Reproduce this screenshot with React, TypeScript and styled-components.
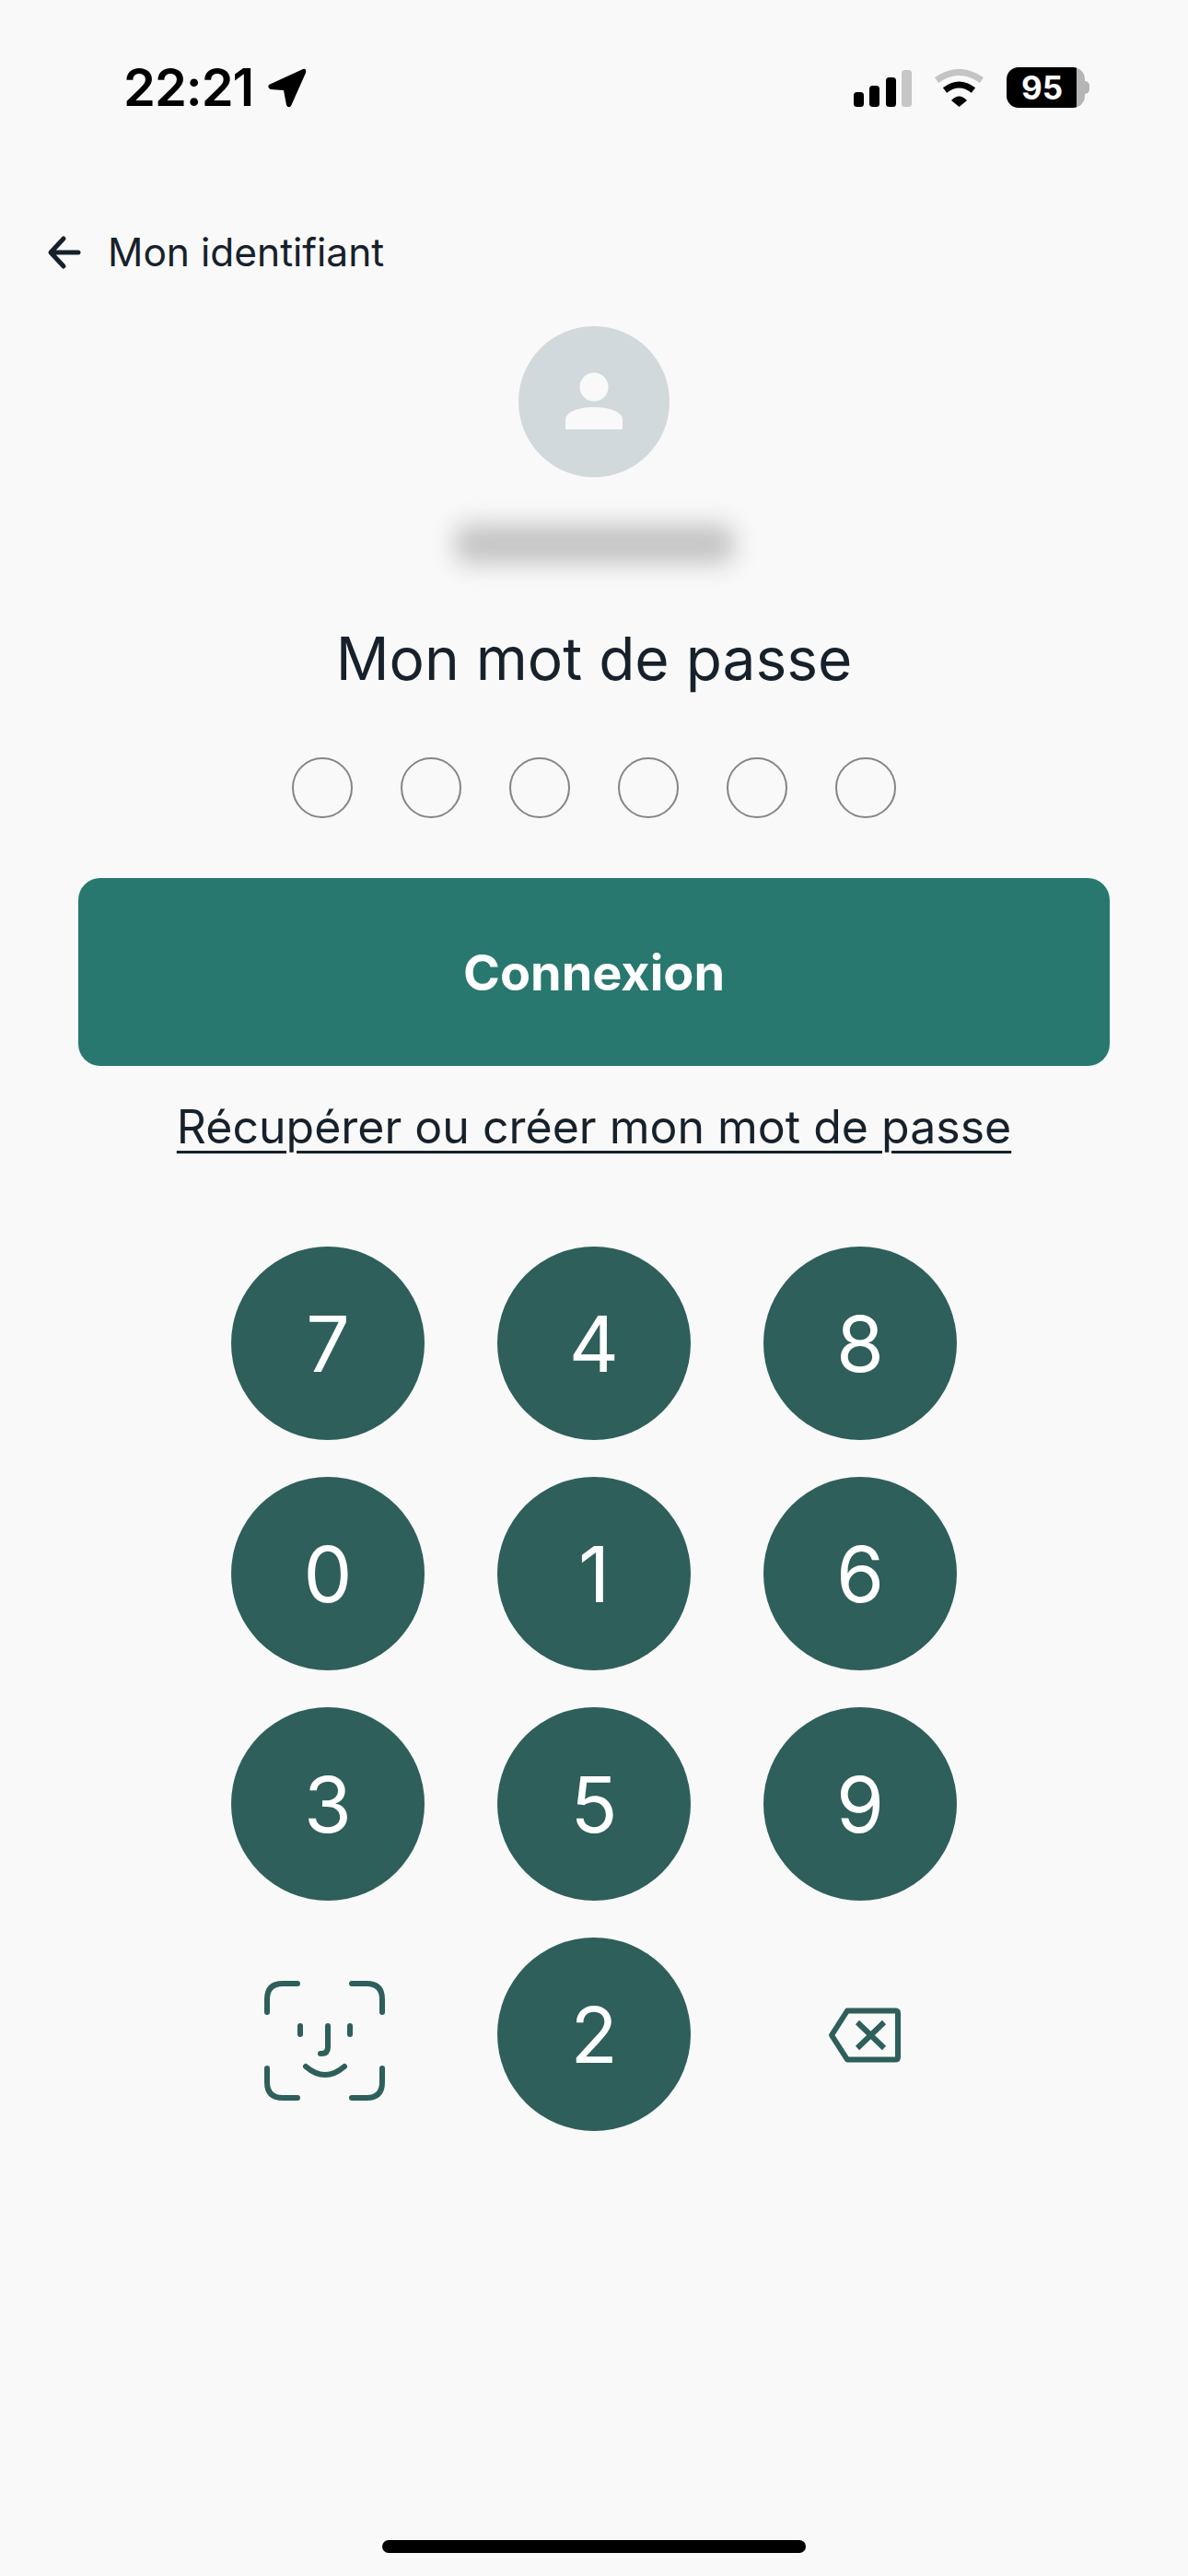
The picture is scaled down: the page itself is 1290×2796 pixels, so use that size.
import React from "react";
import styled, { createGlobalStyle } from "styled-components";

const Global = createGlobalStyle`
  html, body { margin: 0; padding: 0; background: #f9f9f9; }
  * { box-sizing: border-box; }
`;

const Screen = styled.div`
  width: 1290px;
  height: 2796px;
  background: #f9f9f9;
  font-family: Inter, "Noto Sans", sans-serif;
  color: #17212b;
  display: flex;
  flex-direction: column;
  align-items: center;
  overflow: hidden;
`;

const StatusBar = styled.div`
  width: 100%;
  height: 190px;
  padding: 70px 112px 0 134px;
  display: flex;
  align-items: flex-start;
  justify-content: space-between;
`;

const TimeGroup = styled.div`
  display: flex;
  align-items: center;
  gap: 14px;
  height: 50px;
`;

const Time = styled.span`
  font-size: 56px;
  font-weight: 600;
  line-height: 50px;
  color: #000;
  letter-spacing: -1px;
`;

const StatusIcons = styled.div`
  display: flex;
  align-items: flex-start;
  gap: 24px;
  height: 50px;
`;

const Signal = styled.svg`
  width: 63px;
  height: 40px;
  margin-top: 6px;
`;

const Wifi = styled.svg`
  width: 55px;
  height: 41px;
  margin-top: 5px;
`;

const Battery = styled.div`
  width: 85px;
  height: 44px;
  margin-top: 3px;
  border-radius: 13px;
  background: linear-gradient(90deg, #000 0, #000 90%, #b5b5b5 90%);
  color: #fff;
  font-size: 35px;
  font-weight: 700;
  line-height: 44px;
  text-align: center;
  padding-right: 8px;
  position: relative;
  &::after {
    content: "";
    position: absolute;
    left: 85px;
    top: 15px;
    width: 5px;
    height: 14px;
    border-radius: 0 7px 7px 0;
    background: #b5b5b5;
  }
`;

const BackRow = styled.div`
  width: 100%;
  height: 60px;
  margin-top: 54px;
  padding-left: 51px;
  display: flex;
  align-items: center;
  gap: 28px;
`;

const BackLabel = styled.span`
  font-size: 42.5px;
  line-height: 60px;
`;

const Avatar = styled.div`
  width: 164px;
  height: 164px;
  margin-top: 50px;
  border-radius: 50%;
  background: #d2d9dc;
  display: flex;
  align-items: center;
  justify-content: center;
`;

const BlurWindow = styled.div`
  width: 411px;
  height: 117px;
  margin-top: 14px;
  overflow: hidden;
  padding: 37px 54px;
`;

const BlurredName = styled.div`
  width: 100%;
  height: 43px;
  border-radius: 14px;
  background: #c4c4c4;
  filter: blur(13px);
`;

const Title = styled.h1`
  margin: 31px 0 0;
  font-size: 64px;
  font-weight: 400;
  line-height: 70px;
  text-align: center;
`;

const Dots = styled.div`
  display: flex;
  gap: 52px;
  margin-top: 72px;
`;

const Dot = styled.span`
  width: 66px;
  height: 66px;
  border-radius: 50%;
  border: 2.5px solid #858585;
`;

const LoginButton = styled.div`
  width: 1120px;
  height: 204px;
  margin-top: 65px;
  border-radius: 24px;
  background: #28786f;
  color: #fff;
  font-size: 54px;
  font-weight: 700;
  display: flex;
  align-items: center;
  justify-content: center;
`;

const RecoverLink = styled.a`
  margin-top: 36px;
  font-size: 50px;
  line-height: 60px;
  color: #17212b;
  text-decoration: underline;
  text-decoration-thickness: 3px;
  text-underline-offset: 8px;
`;

const Keypad = styled.div`
  display: grid;
  grid-template-columns: repeat(3, 210px);
  grid-auto-rows: 210px;
  column-gap: 79px;
  row-gap: 40px;
  margin-top: 100px;
`;

const Key = styled.div`
  width: 210px;
  height: 210px;
  border-radius: 50%;
  background: #2e5f5a;
  color: #fff;
  font-size: 84px;
  font-weight: 400;
  display: flex;
  align-items: center;
  justify-content: center;
`;

const IconKey = styled.div`
  width: 210px;
  height: 210px;
  display: flex;
  align-items: center;
  justify-content: center;
`;

const Spacer = styled.div`
  flex: 1;
`;

const HomeIndicator = styled.div`
  width: 460px;
  height: 14px;
  margin-bottom: 25px;
  border-radius: 7px;
  background: #000;
`;

const keys = ["7", "4", "8", "0", "1", "6", "3", "5", "9"];

export default function App() {
  return (
    <>
      <Global />
      <Screen>
        <StatusBar>
          <TimeGroup>
            <Time>22:21</Time>
            <svg width="46" height="48" viewBox="0 0 46 48">
              <path d="M3 21 L40 4 Q44 3 43 8 L27 44 Q24 47 22 43 L19 27 L5 26 Q1 24 3 21 Z" fill="#000" />
            </svg>
          </TimeGroup>
          <StatusIcons>
            <Signal viewBox="0 0 63 40">
              <rect x="0" y="24" width="11" height="16" rx="3.5" fill="#000" />
              <rect x="17" y="17" width="11" height="23" rx="3.5" fill="#000" />
              <rect x="35" y="8" width="11" height="32" rx="3.5" fill="#000" />
              <rect x="52" y="0" width="11" height="40" rx="3.5" fill="#c6c6c6" />
            </Signal>
            <Wifi viewBox="0 0 55 41">
              <path d="M3 12 Q27.5 -5 52 12" fill="none" stroke="#c4c4c4" strokeWidth="7" />
              <path d="M12 23 Q27.5 11 43 23" fill="none" stroke="#000" strokeWidth="7" />
              <path d="M19 34 Q27.5 25 36 34 L27.5 41 Z" fill="#000" />
            </Wifi>
            <Battery>95</Battery>
          </StatusIcons>
        </StatusBar>

        <BackRow>
          <svg width="38" height="38" viewBox="0 0 38 38">
            <path d="M34 19 H5 M18 4 L4 19 L18 34" fill="none" stroke="#17212b" strokeWidth="5" strokeLinecap="round" strokeLinejoin="round" />
          </svg>
          <BackLabel>Mon identifiant</BackLabel>
        </BackRow>

        <Avatar>
          <svg width="64" height="64" viewBox="0 0 64 64">
            <circle cx="32" cy="16" r="15.5" fill="#f9f9f9" />
            <path d="M1 62 V52 C1 43 15 38 32 38 C49 38 63 43 63 52 V62 Z" fill="#f9f9f9" />
          </svg>
        </Avatar>

        <BlurWindow>
          <BlurredName />
        </BlurWindow>

        <Title>Mon mot de passe</Title>

        <Dots>
          {[0, 1, 2, 3, 4, 5].map((i) => (
            <Dot key={i} />
          ))}
        </Dots>

        <LoginButton>Connexion</LoginButton>

        <RecoverLink>Récupérer ou créer mon mot de passe</RecoverLink>

        <Keypad>
          {keys.map((k) => (
            <Key key={k}>{k}</Key>
          ))}
          <IconKey>
            <svg width="200" height="180" viewBox="0 0 200 180" fill="none" stroke="#2e5f5a" strokeWidth="6" strokeLinecap="round">
              <path d="M34 66 V52 Q34 35 51 35 H67" />
              <path d="M126 35 H142 Q159 35 159 52 V66" />
              <path d="M34 127 V142 Q34 159 51 159 H67" />
              <path d="M126 159 H142 Q159 159 159 142 V127" />
              <path d="M70 81 V90" />
              <path d="M124 81 V90" />
              <path d="M100 81 V104 Q100 111 93 111 H92" />
              <path d="M76 125 Q97 143 118 125" />
            </svg>
          </IconKey>
          <Key>2</Key>
          <IconKey>
            <svg width="140" height="110" viewBox="0 0 140 110" fill="none" stroke="#2e5f5a" strokeWidth="6">
              <path d="M39 56 L56 29.5 H108 Q111 29.5 111 32 V80 Q111 82.5 108 82.5 H56 Z" strokeLinejoin="round" />
              <path d="M67 42 L96 70 M96 42 L67 70" />
            </svg>
          </IconKey>
        </Keypad>

        <Spacer />
        <HomeIndicator />
      </Screen>
    </>
  );
}
